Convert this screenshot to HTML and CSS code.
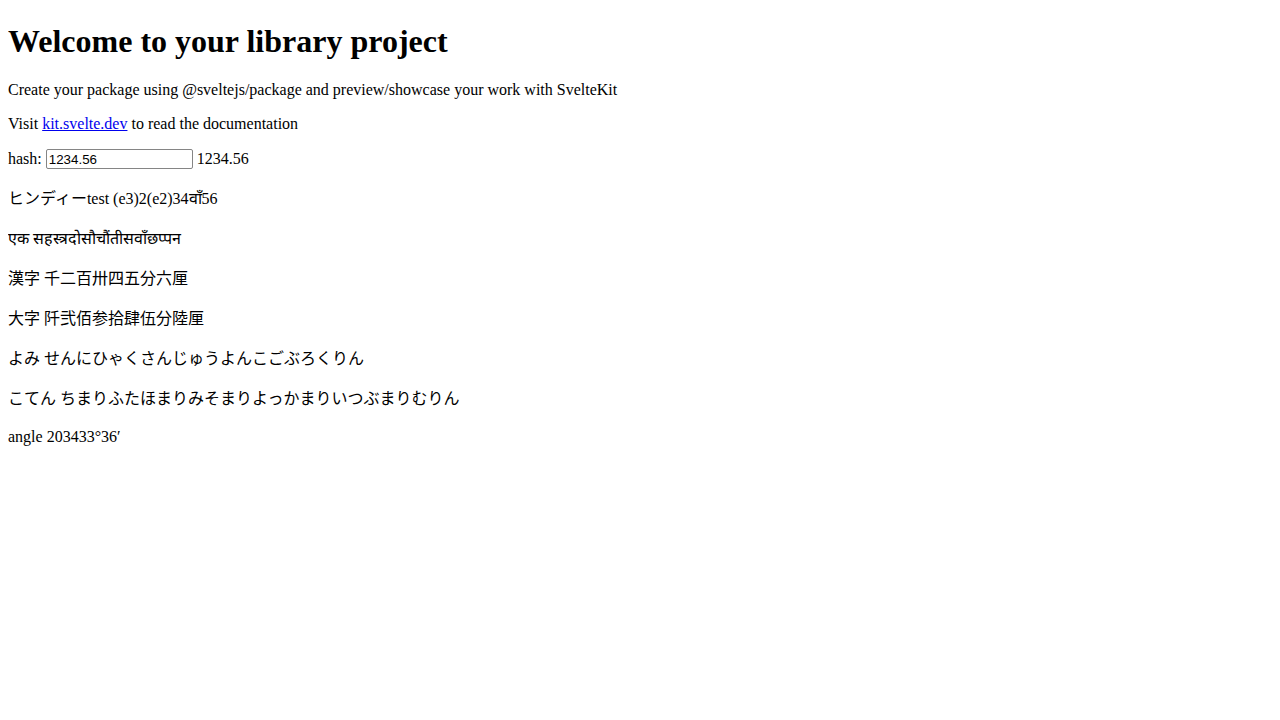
FILE: index.html
```html
<!DOCTYPE html>
<html lang="en">
<head>
<meta charset="utf-8">
<title>Library</title>
<link rel="stylesheet" href="styles.css">
</head>
<body class="page">
<h1 class="title">Welcome to your library project</h1>
<p class="line">Create your package using @sveltejs/package and preview/showcase your work with SvelteKit</p>
<p class="line">Visit <a class="link" href="#">kit.svelte.dev</a> to read the documentation</p>
<p class="line">hash: <input class="hash" type="text" value="1234.56"> 1234.56</p>
<p class="line line-mixed">ヒンディーtest (e3)2(e2)34वाँ56</p>
<p class="line">एक सहस्त्रदोसौचौंतीसवाँछप्पन</p>
<p class="line">漢字 千二百卅四五分六厘</p>
<p class="line">大字 阡弐佰参拾肆伍分陸厘</p>
<p class="line">よみ せんにひゃくさんじゅうよんこごぶろくりん</p>
<p class="line">こてん ちまりふたほまりみそまりよっかまりいつぶまりむりん</p>
<p class="line line-angle">angle 203433°36′</p>
</body>
</html>
```
FILE: styles.css
```css
.page {
  margin: 8px;
  font-family: "Liberation Serif", "Noto Sans CJK JP", serif;
  font-size: 16px;
  color: #000;
  background: #fff;
}
.title {
  font-size: 2em;
  margin: 15px 0 21px;
  font-weight: bold;
}
.line {
  margin: 1em 0;
}
.line-mixed {
  padding-bottom: 2px;
}
.line-angle {
  padding-top: 3px;
}
.link {
  color: #0000ee;
}
.hash {
  box-sizing: border-box;
  width: 147px;
  height: 20px;
  padding: 1px 2px;
  border: 1px solid #858585;
  border-radius: 2px;
  font-family: "Liberation Sans", Arial, sans-serif;
  font-size: 13.333px;
  vertical-align: baseline;
}
```
